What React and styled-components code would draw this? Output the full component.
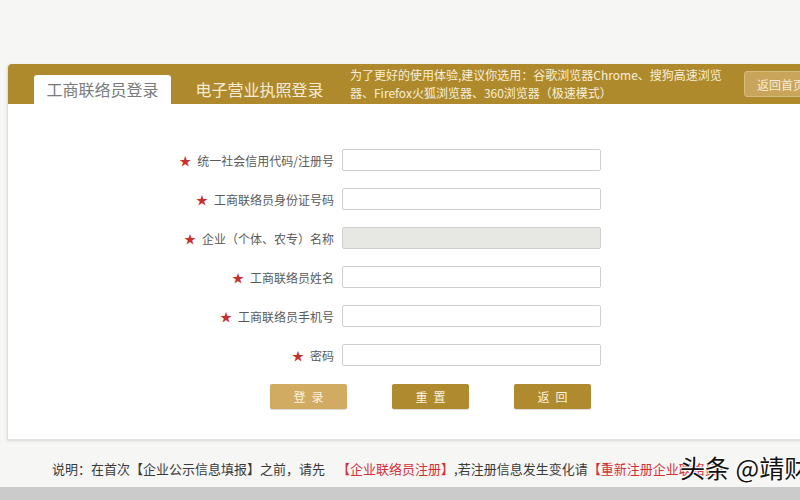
import styled, { createGlobalStyle } from "styled-components";

const GlobalStyle = createGlobalStyle`
    html, body {
        margin: 0;
        padding: 0;
        width: 800px;
        height: 500px;
        overflow: hidden;
        background: #f6f6f5;
        font-family: "Noto Sans CJK SC", "Noto Sans", sans-serif;
    }
`;

const Page = styled.div`
    width: 800px;
    height: 500px;
    display: flex;
    flex-direction: column;
    overflow: hidden;
`;

const Panel = styled.div`
    margin: 64px 0 0 7px;
    width: 840px;
    background: #fff;
    border: 1px solid #e2e2e2;
    border-top: none;
    border-radius: 4px 4px 0 0;
    box-shadow: 0 1px 3px rgba(0, 0, 0, 0.12);
`;

const Header = styled.div`
    height: 40px;
    background: #af8a2d;
    border-radius: 4px 4px 0 0;
    display: flex;
    align-items: flex-end;
    padding-left: 26px;
`;

const Tab = styled.div`
    width: 137px;
    height: 29px;
    display: flex;
    align-items: center;
    justify-content: center;
    font-size: 16px;
    color: ${(p) => (p.$active ? "#7a7a7a" : "#f6ecd6")};
    background: ${(p) => (p.$active ? "#fff" : "transparent")};
    border-radius: 3px 3px 0 0;
    margin-right: ${(p) => (p.$active ? "20px" : "14px")};
    padding-bottom: 2px;
    box-sizing: border-box;
`;

const Notice = styled.div`
    align-self: center;
    width: 390px;
    font-size: 12px;
    line-height: 18px;
    color: #f8efd9;
    margin-left: 8px;
`;

const HomeButton = styled.div`
    align-self: center;
    margin-left: 4px;
    width: 80px;
    height: 26px;
    box-sizing: border-box;
    background: #c9a55c;
    border: 1px solid #d6ba80;
    border-radius: 3px;
    color: #f7ecd3;
    font-size: 12px;
    display: flex;
    align-items: center;
    padding-left: 12px;
`;

const Form = styled.div`
    padding: 45px 0 30px 0;
    display: flex;
    flex-direction: column;
    gap: 17px;
`;

const Row = styled.div`
    display: flex;
    align-items: center;
`;

const Label = styled.div`
    width: 334px;
    padding-right: 8px;
    box-sizing: border-box;
    text-align: right;
    font-size: 12px;
    color: #5a5a5a;
    white-space: nowrap;
`;

const Star = styled.span`
    color: #c8302f;
    margin-right: 6px;
`;

const Input = styled.input`
    width: 259px;
    height: 22px;
    box-sizing: border-box;
    border: 1px solid #cfcfcf;
    border-radius: 2px;
    background: ${(p) => (p.disabled ? "#e7e7e4" : "#fff")};
    outline: none;
    padding: 0 4px;
`;

const ButtonRow = styled.div`
    display: flex;
    gap: 45px;
    padding-left: 262px;
    margin-top: 1px;
`;

const Button = styled.div`
    width: 77px;
    height: 25px;
    border-radius: 2px;
    background: ${(p) => (p.$light ? "#d2ab62" : "#b08a2e")};
    color: #fbf3e0;
    font-size: 12px;
    letter-spacing: 6px;
    text-indent: 6px;
    display: flex;
    align-items: center;
    justify-content: center;
    box-shadow: 0 1px 1px rgba(0, 0, 0, 0.15);
`;

const Note = styled.div`
    position: relative;
    margin: 19px 0 0 52px;
    font-size: 13px;
    color: #3a3a3a;
    white-space: nowrap;
`;

const Red = styled.span`
    color: #d3303a;
    margin-left: ${(p) => p.$gap || 0}px;
`;

const Watermark = styled.div`
    position: absolute;
    left: 628px;
    top: -10px;
    font-size: 25px;
    line-height: 36px;
    color: #111;
    text-shadow: 0 0 2px #fff, 0 0 2px #fff, 1px 1px 0 #fff, -1px -1px 0 #fff;
`;

const BottomBar = styled.div`
    margin-top: auto;
    height: 13px;
    background: #cbcbcb;
`;

const fields = [
    { label: "统一社会信用代码/注册号" },
    { label: "工商联络员身份证号码" },
    { label: "企业（个体、农专）名称", disabled: true },
    { label: "工商联络员姓名" },
    { label: "工商联络员手机号" },
    { label: "密码", type: "password" },
];

const App = () => {
    return (
        <Page>
            <GlobalStyle />
            <Panel>
                <Header>
                    <Tab $active>工商联络员登录</Tab>
                    <Tab>电子营业执照登录</Tab>
                    <Notice>
                        为了更好的使用体验,建议你选用：谷歌浏览器Chrome、搜狗高速浏览
                        <br />
                        器、Firefox火狐浏览器、360浏览器（极速模式）
                    </Notice>
                    <HomeButton>返回首页</HomeButton>
                </Header>
                <Form>
                    {fields.map((f) => (
                        <Row key={f.label}>
                            <Label>
                                <Star>★</Star>
                                {f.label}
                            </Label>
                            <Input type={f.type || "text"} disabled={f.disabled} />
                        </Row>
                    ))}
                    <ButtonRow>
                        <Button $light>登录</Button>
                        <Button>重置</Button>
                        <Button>返回</Button>
                    </ButtonRow>
                </Form>
            </Panel>
            <Note>
                说明：在首次【企业公示信息填报】之前，请先<Red $gap={12}>【企业联络员注册】</Red>,若注册信息发生变化请<Red>【重新注册企业联络员】</Red>
                <Watermark>头条 @靖财经</Watermark>
            </Note>
            <BottomBar />
        </Page>
    );
};

export default App;
